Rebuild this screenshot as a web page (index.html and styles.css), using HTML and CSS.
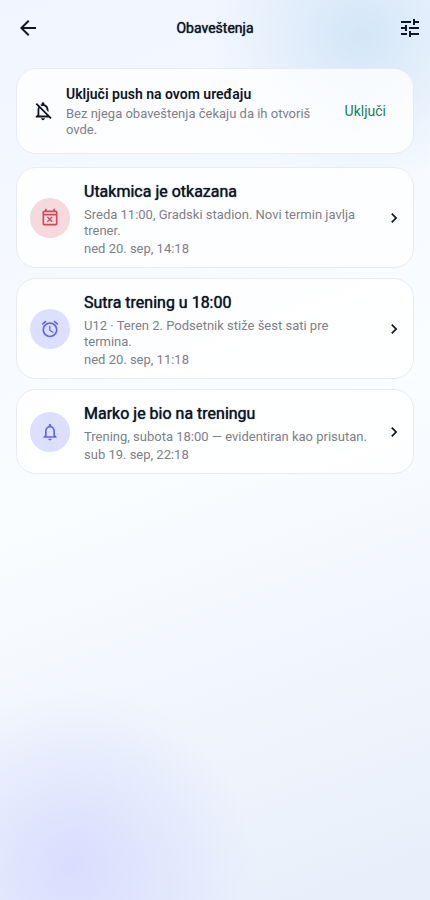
FILE: index.html
```html
<!DOCTYPE html>
<html lang="sr-Latn">
<head>
<meta charset="utf-8">
<meta name="viewport" content="width=device-width, initial-scale=1">
<title>Obaveštenja</title>
<link rel="stylesheet" href="styles.css">
</head>
<body>
<header class="app-bar">
  <button class="icon-button" type="button" aria-label="Nazad">
    <svg class="icon" viewBox="0 0 24 24" aria-hidden="true"><path d="M20 11H7.83l5.59-5.59L12 4l-8 8 8 8 1.41-1.41L7.83 13H20v-2z"/></svg>
  </button>
  <h1 class="app-title">Obaveštenja</h1>
  <button class="icon-button settings" type="button" aria-label="Podešavanja">
    <svg class="icon" viewBox="0 0 24 24" aria-hidden="true"><path d="M3 17v2h6v-2H3zM3 5v2h10V5H3zm10 16v-2h8v-2h-8v-2h-2v6h2zM7 9v2H3v2h4v2h2V9H7zm14 4v-2H11v2h10zm-6-4h2V7h4V5h-4V3h-2v6z"/></svg>
  </button>
</header>
<main class="content">
  <section class="card push-card">
    <svg class="push-icon" viewBox="0 0 24 24" aria-hidden="true"><path d="M12 22c1.1 0 2-.9 2-2h-4c0 1.1.9 2 2 2zm0-15.500c2.490 0 4 2.020 4 4.500v.1l2 2V11c0-3.070-1.630-5.640-4.500-6.320V4c0-.83-.67-1.500-1.500-1.500s-1.500.67-1.500 1.500v.68c-.51.12-.99.32-1.450.56L10.600 6.800C11.040 6.610 11.510 6.500 12 6.500zM5.410 3.350L4 4.760l2.810 2.810C6.290 8.570 6 9.740 6 11v5l-2 2v1h14.240l1.740 1.740 1.410-1.410L5.410 3.350zM16 17H8v-6c0-.68.12-1.320.34-1.900L16 16.760V17z"/></svg>
    <div class="text">
      <h2 class="push-title">Uključi push na ovom uređaju</h2>
      <p class="detail">Bez njega obaveštenja čekaju da ih otvoriš ovde.</p>
    </div>
    <button class="text-button" type="button">Uključi</button>
  </section>
  <ul class="list">
    <li>
      <a class="card item" href="#utakmica">
        <span class="avatar avatar-red"><svg class="avatar-icon" viewBox="0 0 24 24" aria-hidden="true"><path d="M9.310 17l2.440-2.440L14.190 17l1.060-1.060-2.440-2.440 2.440-2.440L14.190 10l-2.440 2.440L9.310 10l-1.060 1.060 2.440 2.440-2.440 2.440L9.310 17zM19 3h-1V1h-2v2H8V1H6v2H5c-1.110 0-1.990.9-1.990 2L3 19c0 1.100.89 2 2 2h14c1.100 0 2-.9 2-2V5c0-1.100-.9-2-2-2zm0 16H5V9h14v10zM5 7V5h14v2H5z"/></svg></span>
        <div class="text">
          <h2 class="item-title">Utakmica je otkazana</h2>
          <p class="detail">Sreda 11:00, Gradski stadion. Novi termin javlja trener.</p>
          <p class="detail time">ned 20. sep, 14:18</p>
        </div>
        <svg class="chevron" viewBox="0 0 24 24" aria-hidden="true"><path d="M10 6L8.590 7.410 13.170 12l-4.580 4.590L10 18l6-6z"/></svg>
      </a>
    </li>
    <li>
      <a class="card item" href="#trening">
        <span class="avatar"><svg class="avatar-icon" viewBox="0 0 24 24" aria-hidden="true"><path d="M22 5.720l-4.600-3.860-1.290 1.530 4.600 3.860L22 5.720zM7.880 3.390L6.600 1.860 2 5.710l1.290 1.530 4.590-3.850zM12.500 8H11v6l4.750 2.850.75-1.230-4-2.370V8zM12 4c-4.970 0-9 4.030-9 9s4.020 9 9 9c4.970 0 9-4.030 9-9s-4.030-9-9-9zm0 16c-3.870 0-7-3.130-7-7s3.130-7 7-7 7 3.130 7 7-3.130 7-7 7z"/></svg></span>
        <div class="text">
          <h2 class="item-title">Sutra trening u 18:00</h2>
          <p class="detail">U12 · Teren 2. Podsetnik stiže šest sati pre termina.</p>
          <p class="detail time">ned 20. sep, 11:18</p>
        </div>
        <svg class="chevron" viewBox="0 0 24 24" aria-hidden="true"><path d="M10 6L8.590 7.410 13.170 12l-4.580 4.590L10 18l6-6z"/></svg>
      </a>
    </li>
    <li>
      <a class="card item" href="#prisustvo">
        <span class="avatar"><svg class="avatar-icon" viewBox="0 0 24 24" aria-hidden="true"><path d="M12 22c1.100 0 2-.9 2-2h-4c0 1.100.9 2 2 2zm6-6v-5c0-3.070-1.630-5.640-4.500-6.320V4c0-.83-.67-1.500-1.500-1.500s-1.500.67-1.500 1.500v.68C7.640 5.360 6 7.920 6 11v5l-2 2v1h16v-1l-2-2zm-2 1H8v-6c0-2.480 1.510-4.500 4-4.500s4 2.020 4 4.500v6z"/></svg></span>
        <div class="text">
          <h2 class="item-title">Marko je bio na treningu</h2>
          <p class="detail">Trening, subota 18:00 — evidentiran kao prisutan.</p>
          <p class="detail time">sub 19. sep, 22:18</p>
        </div>
        <svg class="chevron" viewBox="0 0 24 24" aria-hidden="true"><path d="M10 6L8.590 7.410 13.170 12l-4.580 4.590L10 18l6-6z"/></svg>
      </a>
    </li>
  </ul>
</main>
</body>
</html>
```
FILE: styles.css
```css
* {
  box-sizing: border-box;
}

body {
  margin: 0;
  min-height: 100vh;
  font-family: Roboto, "Liberation Sans", sans-serif;
  color: #111625;
  background:
    radial-gradient(circle 150px at 84% 4%, rgba(186, 215, 240, 0.55), rgba(186, 215, 240, 0)),
    radial-gradient(circle 180px at 17% 96%, rgba(205, 210, 255, 0.65), rgba(205, 210, 255, 0)),
    linear-gradient(160deg, #f0f5ff 0%, #fafdff 50%, #e7eefa 100%);
}

h1,
h2,
p {
  margin: 0;
}

button {
  border: 0;
  background: none;
  font-family: inherit;
  cursor: pointer;
}

svg {
  display: block;
  flex: none;
  fill: currentColor;
}

.app-bar {
  display: grid;
  grid-template-columns: 1fr auto 1fr;
  align-items: center;
  height: 56px;
  padding: 0 8px;
}

.icon-button {
  width: 24px;
  height: 24px;
  margin-left: 8px;
  padding: 0;
  color: #111625;
}

.settings {
  justify-self: end;
}

.icon {
  width: 24px;
  height: 24px;
}

.app-title {
  font-size: 14px;
  line-height: 20px;
  font-weight: 400;
  text-shadow: 0 0 1px currentColor;
}

.content {
  padding: 12px 16px;
}

.card {
  display: flex;
  align-items: center;
  border: 1px solid #e8ebf1;
  border-radius: 20px;
  background: rgba(255, 255, 255, 0.78);
}

.push-card {
  gap: 12px;
  padding: 15px;
}

.push-icon {
  width: 22px;
  height: 22px;
}

.text {
  flex: 1;
  min-width: 0;
}

.push-title {
  margin-bottom: 2px;
  font-size: 14px;
  line-height: 20px;
  font-weight: 600;
}

.detail {
  font-size: 13px;
  line-height: 16px;
  color: #7d8088;
}

.time {
  margin-top: 2px;
}

.text-button {
  padding: 8px 12px;
  font-size: 14px;
  line-height: 20px;
  color: #167f59;
}

.list {
  display: grid;
  gap: 10px;
  margin: 13px 0 0;
  padding: 0;
  list-style: none;
}

.item {
  padding: 0 9px 0 13px;
  color: inherit;
  text-decoration: none;
}

.item .text {
  padding: 12px 0 10px;
}

.item-title {
  margin-bottom: 3px;
  font-size: 16px;
  line-height: 24px;
  font-weight: 400;
  text-shadow: 0 0 1px currentColor;
}

.avatar {
  display: grid;
  place-items: center;
  width: 40px;
  height: 40px;
  margin-right: 14px;
  border-radius: 50%;
  color: #6366e3;
  background: #dcdfff;
}

.avatar-red {
  color: #d04a58;
  background: #f5d9dd;
}

.avatar-icon {
  width: 20px;
  height: 20px;
}

.chevron {
  width: 20px;
  height: 20px;
  margin-left: 12px;
}
```
